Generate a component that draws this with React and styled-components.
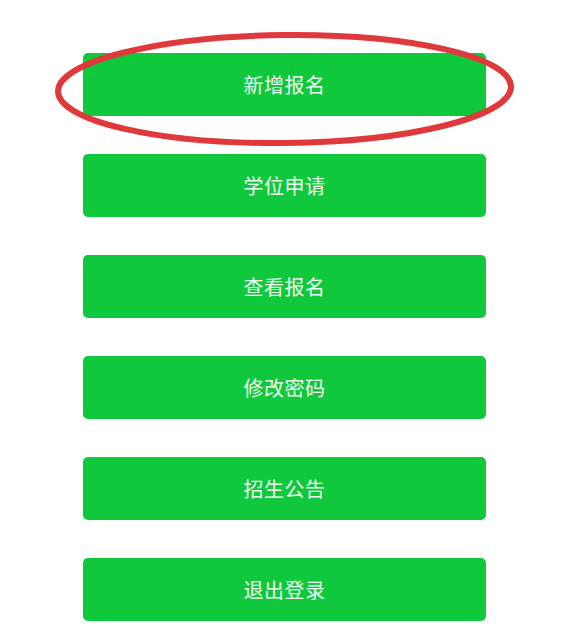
import React from "react";
import styled, { createGlobalStyle } from "styled-components";

const GlobalStyle = createGlobalStyle`
  html, body {
    margin: 0;
    padding: 0;
    background: #ffffff;
  }
  body {
    font-family: "Noto Sans CJK SC", "Noto Sans", sans-serif;
  }
`;

const Page = styled.div`
  position: relative;
  width: 585px;
  height: 640px;
  background: #ffffff;
  overflow: hidden;
`;

const Menu = styled.nav`
  display: flex;
  flex-direction: column;
  gap: 38px;
  padding: 53px 0 0 83px;
`;

const MenuButton = styled.button`
  display: flex;
  align-items: center;
  justify-content: center;
  width: 403px;
  height: 63px;
  border: none;
  border-radius: 5px;
  background: #10c83c;
  color: #eefff2;
  font-family: "Noto Sans CJK SC", "Noto Sans", sans-serif;
  font-size: 20px;
  font-weight: 400;
  letter-spacing: 0.5px;
  cursor: pointer;
  padding: 0;
`;

const Highlight = styled.svg`
  position: absolute;
  left: 0;
  top: 0;
  pointer-events: none;
`;

const items = ["新增报名", "学位申请", "查看报名", "修改密码", "招生公告", "退出登录"];

export default function App() {
  return (
    <Page>
      <GlobalStyle />
      <Menu>
        {items.map((t) => (
          <MenuButton key={t}>{t}</MenuButton>
        ))}
      </Menu>
      <Highlight width="585" height="200" viewBox="0 0 585 200">
        <ellipse
          cx="284.5"
          cy="89"
          rx="226.5"
          ry="54"
          fill="none"
          stroke="#e0393b"
          strokeWidth="6"
          transform="rotate(-0.6 284.5 89)"
        />
      </Highlight>
    </Page>
  );
}
